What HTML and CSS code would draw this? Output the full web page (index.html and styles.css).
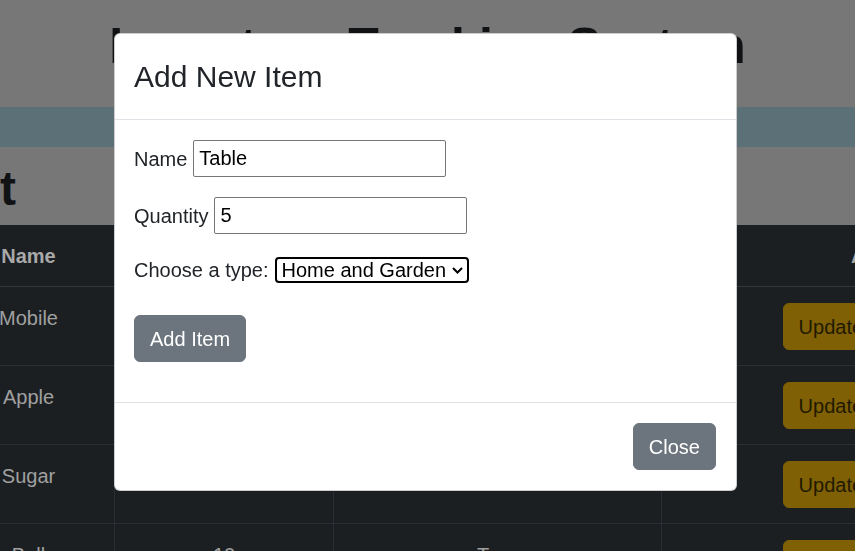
FILE: index.html
```html
<!DOCTYPE html>
<html lang="en">
<head>
<meta charset="utf-8">
<title>Inventory Tracking System</title>
<link rel="stylesheet" href="styles.css">
</head>
<body>
<div class="page">
  <header class="top">
    <h1 class="title">Inventory Tracking System</h1>
  </header>
  <nav class="navbar"></nav>
  <main class="content">
    <h2 class="list-title">t</h2>
    <table class="items">
      <colgroup>
        <col class="c-name"><col class="c-qty"><col class="c-type"><col class="c-actions">
      </colgroup>
      <thead>
        <tr><th>Name</th><th>Quantity</th><th>Type</th><th>Actions</th></tr>
      </thead>
      <tbody>
        <tr><td>Mobile</td><td>2</td><td>Electronics</td><td><div class="actions"><button class="btn btn-warning">Update</button><button class="btn btn-danger">Delete</button></div></td></tr>
        <tr><td>Apple</td><td>5</td><td>Grocery</td><td><div class="actions"><button class="btn btn-warning">Update</button><button class="btn btn-danger">Delete</button></div></td></tr>
        <tr><td>Sugar</td><td>3</td><td>Grocery</td><td><div class="actions"><button class="btn btn-warning">Update</button><button class="btn btn-danger">Delete</button></div></td></tr>
        <tr><td>Ball</td><td>10</td><td>Toys</td><td><div class="actions"><button class="btn btn-warning">Update</button><button class="btn btn-danger">Delete</button></div></td></tr>
      </tbody>
    </table>
  </main>
</div>

<div class="modal" role="dialog" aria-labelledby="modal-title">
  <div class="modal-header">
    <h4 class="modal-title" id="modal-title">Add New Item</h4>
  </div>
  <div class="modal-body">
    <form class="item-form">
      <div class="field">
        <label for="name">Name</label>
        <input id="name" class="text-input" type="text" value="Table">
      </div>
      <div class="field">
        <label for="qty">Quantity</label>
        <input id="qty" class="text-input" type="text" value="5">
      </div>
      <div class="field field-select">
        <label for="type">Choose a type:</label>
        <span class="select-wrap">
          <select id="type" class="select">
            <option>Home and Garden</option>
            <option>Electronics</option>
            <option>Grocery</option>
            <option>Toys</option>
          </select>
          <svg class="chevron" width="11" height="7" viewBox="0 0 11 7" aria-hidden="true"><path d="M1 1 L5.5 5.5 L10 1" fill="none" stroke="#000" stroke-width="2"/></svg>
        </span>
      </div>
      <button type="button" class="btn btn-secondary add-btn">Add Item</button>
    </form>
  </div>
  <div class="modal-footer">
    <button type="button" class="btn btn-secondary">Close</button>
  </div>
</div>
</body>
</html>
```

FILE: styles.css
```css
html, body {
  margin: 0;
  height: 100%;
  overflow: hidden;
}

body {
  font-family: "Liberation Sans", Arial, sans-serif;
  font-size: 20px;
  line-height: 1.5;
  color: #212529;
  background: #777778;
}

.top {
  height: 107px;
  box-sizing: border-box;
  padding-top: 16px;
  background: #777778;
}

.title {
  margin: 0;
  text-align: center;
  font-size: 50px;
  line-height: 1.2;
  font-weight: 700;
  color: #101214;
  white-space: nowrap;
}

.navbar {
  height: 40px;
  background: #5b7177;
}

.content {
  background: #777778;
}

.list-title {
  margin: 0;
  height: 78px;
  box-sizing: border-box;
  padding: 13px 0 0;
  font-size: 48px;
  line-height: 1.2;
  font-weight: 700;
  color: #101214;
}

.items {
  margin-left: -58px;
  border-collapse: collapse;
  table-layout: fixed;
  width: 1171px;
  background: #1c1f22;
  color: #a0a0a0;
}

.c-name { width: 172px; }
.c-qty { width: 219px; }
.c-type { width: 328px; }
.c-actions { width: 452px; }

.items th,
.items td {
  padding: 16px 16px 15px;
  text-align: center;
  vertical-align: top;
  border-left: 1px solid #2a2e32;
  border-bottom: 1px solid #2b2f33;
}

.items th {
  font-weight: 700;
  color: #a9a9a9;
  border-bottom-color: #33373b;
}

.actions {
  display: flex;
  justify-content: center;
  gap: 24px;
}

.btn {
  font: inherit;
  line-height: 30px;
  padding: 7.5px 15px;
  border-radius: 6px;
  border: 1px solid transparent;
  cursor: pointer;
}

.btn-warning {
  background: #7f6004;
  border-color: #7f6004;
  color: #221a00;
}

.btn-danger {
  background: #6e1a22;
  border-color: #6e1a22;
  color: #808080;
}

.btn-secondary {
  background: #6c757d;
  border-color: #6c757d;
  color: #fff;
}

/* Modal */
.modal {
  position: fixed;
  left: 114px;
  top: 33px;
  width: 623px;
  box-sizing: border-box;
  background: #fff;
  border: 1px solid rgba(0, 0, 0, 0.2);
  border-radius: 6px;
}

.modal-header {
  padding: 20px 19px;
  border-bottom: 1px solid #dee2e6;
}

.modal-title {
  margin: 0;
  font-size: 30px;
  line-height: 1.5;
  font-weight: 400;
  color: #212529;
}

.modal-body {
  padding: 20px 19px;
}

.field {
  display: flex;
  align-items: center;
  gap: 6px;
  margin-bottom: 20px;
}

.field-select {
  height: 30px;
  padding-top: 1px;
  margin-bottom: 30px;
}

.text-input {
  width: 253px;
  height: 37px;
  box-sizing: border-box;
  padding: 0 5px;
  border: 1px solid #767676;
  border-radius: 2px;
  font: inherit;
  color: #000;
  background: #fff;
}

.select-wrap {
  position: relative;
  display: inline-block;
}

.select {
  -webkit-appearance: none;
  appearance: none;
  display: block;
  width: 194px;
  height: 26px;
  box-sizing: border-box;
  padding: 0 0 0 5px;
  border: 2px solid #000;
  border-radius: 4px;
  font: inherit;
  line-height: 22px;
  color: #000;
  background: #fff;
}

.chevron {
  position: absolute;
  right: 6px;
  top: 10px;
  pointer-events: none;
}

.add-btn {
  display: block;
  margin: 0 0 20px;
}

.modal-footer {
  display: flex;
  justify-content: flex-end;
  padding: 15px;
  border-top: 1px solid #dee2e6;
}

.modal-footer .btn {
  margin: 5px;
}
```
